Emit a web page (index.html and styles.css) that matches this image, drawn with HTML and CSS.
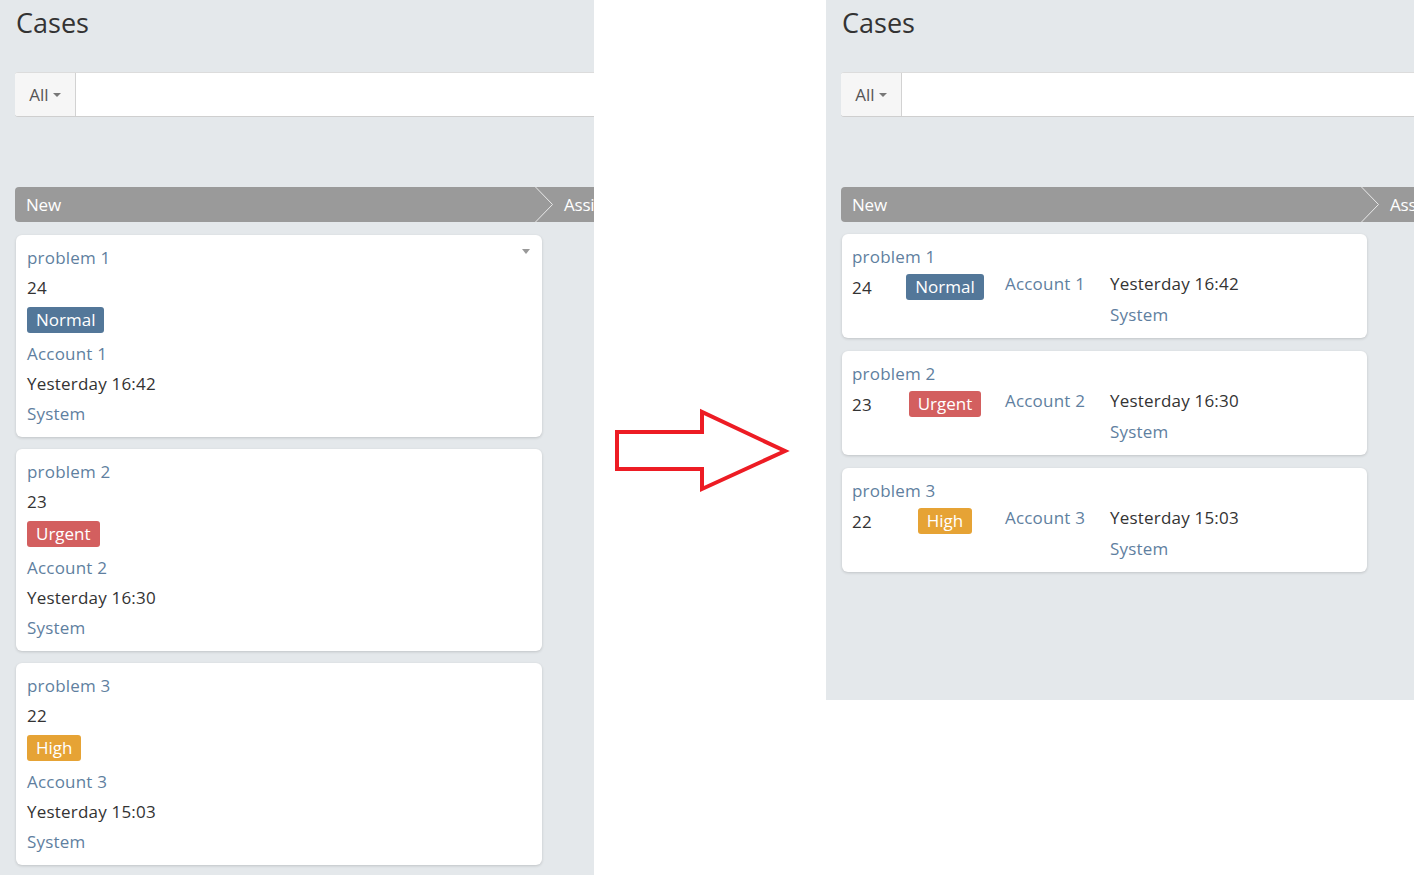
FILE: index.html
```html
<!DOCTYPE html>
<html>
<head>
<meta charset="utf-8">
<link rel="stylesheet" href="styles.css">
</head>
<body>
<div class="compare">
  <section class="panel panel-left">
    <div class="page">
      <h1 class="title">Cases</h1>
      <div class="search">
        <button class="filter">All <span class="caret"></span></button>
        <div class="search-input"></div>
      </div>
      <div class="board">
        <div class="pipeline">
          <div class="stage"><span class="stage-label">New</span><svg class="chev" width="18" height="35" viewBox="0 0 18 35"><polyline points="0.5,0 17.5,17.5 0.5,35" fill="none" stroke="#e9e9e9" stroke-width="1"/></svg></div>
          <div class="stage"><span class="stage-label">Assigned</span></div>
        </div>
        <div class="column column-v">
          <div class="card card-v">
            <span class="card-caret"></span>
            <div class="line link">problem 1</div>
            <div class="line">24</div>
            <div class="badge-line"><span class="badge normal">Normal</span></div>
            <div class="line link">Account 1</div>
            <div class="line">Yesterday 16:42</div>
            <div class="line link">System</div>
          </div>
          <div class="card card-v">
            <div class="line link">problem 2</div>
            <div class="line">23</div>
            <div class="badge-line"><span class="badge urgent">Urgent</span></div>
            <div class="line link">Account 2</div>
            <div class="line">Yesterday 16:30</div>
            <div class="line link">System</div>
          </div>
          <div class="card card-v">
            <div class="line link">problem 3</div>
            <div class="line">22</div>
            <div class="badge-line"><span class="badge high">High</span></div>
            <div class="line link">Account 3</div>
            <div class="line">Yesterday 15:03</div>
            <div class="line link">System</div>
          </div>
        </div>
      </div>
    </div>
  </section>

  <div class="middle">
    <svg class="arrow" width="232" height="120" viewBox="594 391 232 120">
      <polygon points="617,432 702,432 702,412 785,451 702,489 702,469 617,469" fill="none" stroke="#ed1c24" stroke-width="4" stroke-linejoin="miter"/>
    </svg>
  </div>

  <section class="panel panel-right">
    <div class="page">
      <h1 class="title">Cases</h1>
      <div class="search">
        <button class="filter">All <span class="caret"></span></button>
        <div class="search-input"></div>
      </div>
      <div class="board">
        <div class="pipeline">
          <div class="stage"><span class="stage-label">New</span><svg class="chev" width="18" height="35" viewBox="0 0 18 35"><polyline points="0.5,0 17.5,17.5 0.5,35" fill="none" stroke="#e9e9e9" stroke-width="1"/></svg></div>
          <div class="stage"><span class="stage-label">Assigned</span></div>
        </div>
        <div class="column column-h">
          <div class="card card-h">
            <div class="line link">problem 1</div>
            <div class="row">
              <div class="col-num line">24</div>
              <div class="col-badge"><span class="badge normal">Normal</span></div>
              <div class="col-acc line link">Account 1</div>
              <div class="col-date">
                <div class="line">Yesterday 16:42</div>
                <div class="line link">System</div>
              </div>
            </div>
          </div>
          <div class="card card-h">
            <div class="line link">problem 2</div>
            <div class="row">
              <div class="col-num line">23</div>
              <div class="col-badge"><span class="badge urgent">Urgent</span></div>
              <div class="col-acc line link">Account 2</div>
              <div class="col-date">
                <div class="line">Yesterday 16:30</div>
                <div class="line link">System</div>
              </div>
            </div>
          </div>
          <div class="card card-h">
            <div class="line link">problem 3</div>
            <div class="row">
              <div class="col-num line">22</div>
              <div class="col-badge"><span class="badge high">High</span></div>
              <div class="col-acc line link">Account 3</div>
              <div class="col-date">
                <div class="line">Yesterday 15:03</div>
                <div class="line link">System</div>
              </div>
            </div>
          </div>
        </div>
      </div>
    </div>
  </section>
</div>
</body>
</html>
```

FILE: styles.css
```css
* { box-sizing: border-box; }

html, body {
  margin: 0;
  padding: 0;
  background: #ffffff;
  font-family: "Open Sans", "Noto Sans", sans-serif;
  color: #333333;
}

.compare {
  display: flex;
  align-items: flex-start;
  width: 1414px;
  height: 875px;
  overflow: hidden;
}

.panel {
  background: #e4e8eb;
  overflow: hidden;
  flex: none;
}

.panel-left {
  width: 594px;
  height: 875px;
}

.middle {
  width: 232px;
  flex: none;
  padding-top: 391px;
}

.arrow { display: block; }

.panel-right {
  width: 588px;
  height: 700px;
}

.page {
  width: 1200px;
  padding: 0 0 0 15px;
}

.title {
  margin: 8px 0 0 1px;
  font-size: 27px;
  line-height: 30px;
  font-weight: 400;
  color: #333;
}

.search {
  display: flex;
  height: 44px;
  margin-top: 34px;
  background: #fff;
  border-top: 1px solid #dcdcdc;
  border-radius: 3px 0 0 3px;
  box-shadow: 0 1px 0 #cfcfcf;
}

.filter {
  width: 61px;
  height: 43px;
  border: 0;
  border-right: 1px solid #d2d2d2;
  background: #f6f6f6;
  border-radius: 3px 0 0 3px;
  font-family: inherit;
  font-size: 17px;
  color: #555;
  padding: 0 0 1px 0;
  display: flex;
  align-items: center;
  justify-content: center;
  gap: 4px;
}

.caret {
  display: inline-block;
  width: 0;
  height: 0;
  border-left: 4.5px solid transparent;
  border-right: 4.5px solid transparent;
  border-top: 4.5px solid #777;
  margin-top: 2px;
}

.search-input {
  flex: 1;
  background: #fff;
}

.board {
  margin-top: 71px;
}

.pipeline {
  display: flex;
  height: 35px;
  background: #9a9a9a;
  border-radius: 4px 0 0 4px;
}

.stage {
  width: 538px;
  display: flex;
  align-items: center;
  flex: none;
}

.stage-label {
  flex: 1;
  padding-left: 11px;
  color: #fff;
  font-size: 17px;
  line-height: 35px;
  letter-spacing: -0.2px;
}

.chev { display: block; flex: none; }

.column {
  width: 538px;
  display: flex;
  flex-direction: column;
  padding-left: 1px;
}

.column-v {
  gap: 12px;
  margin-top: 13px;
}

.column-h {
  gap: 13px;
  margin-top: 12px;
}

.card {
  position: relative;
  width: 526px;
  background: #fff;
  border-radius: 6px;
  box-shadow: 0 1px 3px rgba(0, 0, 0, 0.16);
}

.card-v {
  padding: 12px 11px 12px 11px;
  display: flex;
  flex-direction: column;
  gap: 8px;
}

.line {
  font-size: 17px;
  line-height: 22px;
  letter-spacing: 0.2px;
  white-space: nowrap;
}

.link { color: #5f7fa0; }

.badge-line {
  display: flex;
  height: 26px;
  margin-bottom: 2px;
}

.badge {
  display: inline-block;
  color: #fff;
  font-size: 17px;
  line-height: 26px;
  height: 26px;
  padding: 0 9px;
  border-radius: 3px;
  white-space: nowrap;
}

.normal { background: #537799; }
.urgent { background: #d35f5f; }
.high { background: #e6a335; }

.card-caret {
  position: absolute;
  top: 14px;
  right: 12px;
  width: 0;
  height: 0;
  border-left: 4.5px solid transparent;
  border-right: 4.5px solid transparent;
  border-top: 5px solid #999;
}

.card-h {
  width: 525px;
  padding: 12px 10px 12px 10px;
  display: flex;
  flex-direction: column;
  gap: 8px;
}

.row {
  display: flex;
  align-items: flex-start;
}

.col-num {
  width: 43px;
  flex: none;
  padding-top: 1px;
}

.col-badge {
  width: 100px;
  flex: none;
  display: flex;
  justify-content: center;
  margin-top: -2px;
}

.col-acc {
  width: 100px;
  flex: none;
  text-align: center;
  margin-top: -3px;
}

.col-date {
  padding-left: 15px;
  margin-top: -3px;
  display: flex;
  flex-direction: column;
  gap: 9px;
}
```
